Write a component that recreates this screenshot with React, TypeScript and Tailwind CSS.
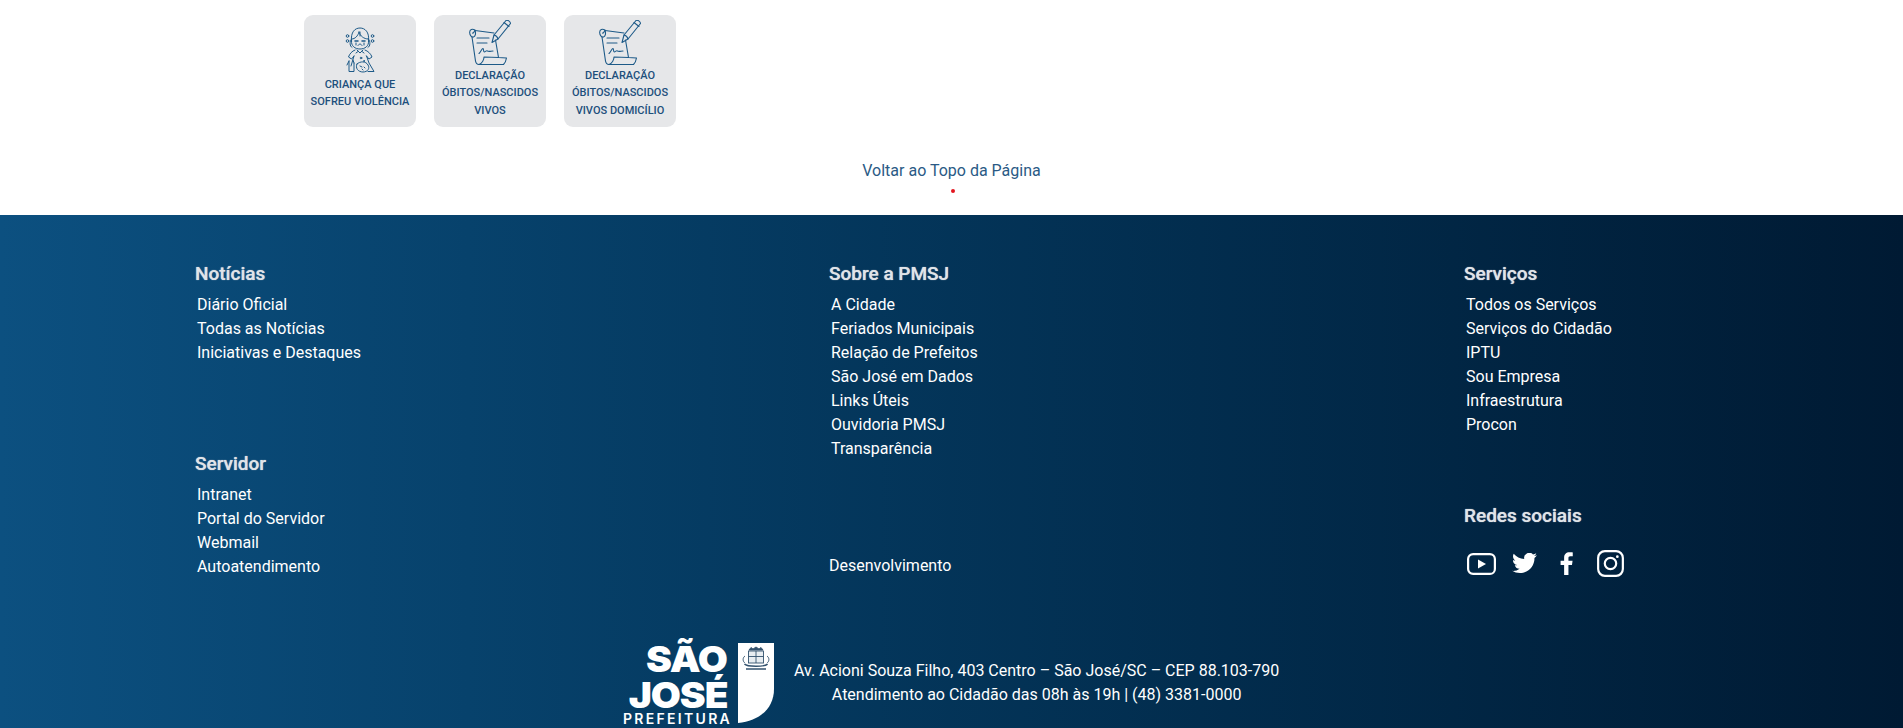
import React from "react";

const roboto = { fontFamily: "Roboto, sans-serif" };

function Scroll() {
  return (
    <svg width="42" height="46" viewBox="0 0 42 46" fill="none" stroke="#1d5a88" strokeWidth="1.100" strokeLinecap="round" strokeLinejoin="round">
      <path d="M6 10.500 L25 13 M3 17 L6.500 41 C7 43.500 8.500 44.500 10 44.500 L34.500 44.500 C36 43 37 41 37.500 38 L29.500 37.500 L26.500 20" />
      <path d="M6 10 C3 8.500 1 9.500 0.700 12 C0.500 15 2.500 17.500 4.500 17 C6.500 16.500 7 13.500 6 10 C5 12 4.500 13.500 3.500 13" />
      <path d="M10 44.500 C13 43.500 15 40 15 37 L29.500 37.500" />
      <path d="M8 18 L20 18 M8 23 L18 23" />
      <path d="M10 33.500 C12 32 13 28 14 28.500 C15 29 14 32 15.500 32 C17 31.500 17.500 30 18.500 31 C20 32 22 31 24 31" />
      <path d="M25 15 L37 0.500 C38.500 -0.500 41.500 1.500 41.500 3.500 L29 19 L23 22.500 Z" />
      <path d="M25 15 C27 15.500 28.500 17 29 19 M35 2.500 L40 6.500" />
    </svg>
  );
}

function Child() {
  return (
    <svg width="30" height="46" viewBox="0 0 30 46" fill="none" stroke="#1d5a88" strokeWidth="1" strokeLinecap="round" strokeLinejoin="round">
      <path d="M6.500 14 C5.500 5 10 1 15 1 C20 1 24.500 5 23.500 14 C24 19 20 22 15 22 C10 22 6 19 6.500 14 Z" />
      <path d="M7 12 C10 12 13 9 14 5 M14 5 C15 9 19 12 23 12 M15 5 L15 9" />
      <path d="M6.500 12 C4.500 15 4.500 19 7 20.500 M23.500 12 C25.500 15 25.500 19 23 20.500" />
      <path d="M10 14 L13 14 M17 14 L20 14" strokeWidth="1.500" />
      <path d="M11 16 L11 18 M19 16 L19 18 M13 18.500 C14 16.500 16 16.500 17 18.500" />
      <circle cx="2.500" cy="9" r="1.300" />
      <circle cx="2.500" cy="14" r="1.300" />
      <circle cx="27.500" cy="9" r="1.300" />
      <circle cx="27.500" cy="14" r="1.300" />
      <path d="M10 23 C7 24 4.500 27 3.500 30 L6.500 32 L9 29 M20 23 C23 24 26 27 27 30 L24 32 L21.500 29" />
      <path d="M12 23 L15 26 L18 23 M13 24.500 L11 26 M17 24.500 L19 26" />
      <path d="M9 29 L6 39 M21.500 29 L24 36 L29 44.500 L23 44.500" />
      <path d="M4 34 L4 44.500 L9 44.500 L9 36 M2 38 L4 34 M9 36 L8 33" />
      <path d="M12 37 C15 34 21 34 23 38 C25 41 23 45 18 45 C13 45 10 41 12 37 Z" />
      <circle cx="16" cy="31" r="0.800" />
      <circle cx="19" cy="34" r="0.500" />
      <path d="M15 39 L17 40 M19 40 L20 41 M17 42 L18 43" />
    </svg>
  );
}

function Card({ icon, lines, compact }: { icon: React.ReactNode; lines: string[]; compact?: boolean }) {
  return (
    <div className="flex h-[112px] w-[112px] flex-col items-center rounded-[9px] bg-[#e6e7e9] pt-[5px]">
      <div className={compact ? "flex h-[47px] items-start" : "flex h-[56px] items-start pt-[7px]"}>{icon}</div>
      <div className="text-center text-[11px] font-medium leading-[17.300px] whitespace-nowrap text-[#1d4f7c]">
        {lines.map((l) => (
          <div key={l}>{l}</div>
        ))}
      </div>
    </div>
  );
}

function Heading({ children }: { children: React.ReactNode }) {
  return <div className="text-[19px] font-medium leading-[24px] text-[#e0e4e9] [text-shadow:0_0_1px_#c7ccd3]">{children}</div>;
}

function LinkGroup({ title, links, className }: { title: string; links: string[]; className?: string }) {
  return (
    <div className={className}>
      <Heading>{title}</Heading>
      <ul className="mt-[7px] pl-[2px]">
        {links.map((l) => (
          <li key={l} className="text-[16px] leading-[24px] text-white">
            {l}
          </li>
        ))}
      </ul>
    </div>
  );
}

function Social() {
  return (
    <div className="mt-[22px] flex items-center pl-[3px]">
      <svg width="29" height="22" viewBox="0 0 29 22" fill="none" className="mr-[16px]">
        <rect x="1.100" y="1.100" width="26.800" height="19.800" rx="5" stroke="#fff" strokeWidth="2.200" />
        <path d="M11 6.500 L19 11 L11 15.500 Z" fill="#fff" />
      </svg>
      <svg width="25" height="22" viewBox="0 0 24 21" fill="#fff" className="mr-[23px]">
        <path d="M23.950 2.070a10 10 0 0 1-2.820.770 4.960 4.960 0 0 0 2.160-2.720c-.950.550-2 .950-3.130 1.180a4.920 4.920 0 0 0-8.380 4.480C7.690 5.590 4.070 3.630 1.640.660a4.820 4.820 0 0 0-.670 2.480c0 1.710.870 3.210 2.190 4.100a4.900 4.900 0 0 1-2.230-.620v.060a4.920 4.920 0 0 0 3.950 4.830 5 5 0 0 1-2.210.080 4.940 4.940 0 0 0 4.600 3.420A9.870 9.870 0 0 1 0 17.040a14 14 0 0 0 7.560 2.210c9.050 0 14-7.500 14-13.980 0-.210 0-.420-.020-.630a9.940 9.940 0 0 0 2.410-2.570z" />
      </svg>
      <svg width="14" height="23" viewBox="0 0 14 24" fill="#fff" className="mr-[23px]">
        <path d="M4 24 V13.500 H0.300 V9.200 H4 V6 C4 2.300 6.200 0.300 9.500 0.300 C11.100 0.300 12.500 0.400 13 0.500 V4.400 H10.500 C8.800 4.400 8.500 5.200 8.500 6.400 V9.200 H12.800 L12.200 13.500 H8.500 V24 Z" />
      </svg>
      <svg width="27" height="27" viewBox="0 0 26 26" fill="none" stroke="#fff" strokeWidth="2.100">
        <rect x="1.100" y="1.100" width="23.800" height="23.800" rx="6.500" />
        <circle cx="13" cy="13" r="5.500" />
        <circle cx="19.600" cy="6.400" r="1.300" fill="#fff" stroke="none" />
      </svg>
    </div>
  );
}

function Crest() {
  return (
    <g fill="none" stroke="#33526e" strokeWidth="0.900">
      <path d="M11 7 L13 4.500 L15 6 L18 4 L21 6 L23 4.500 L25 7 Z" fill="#33526e" />
      <rect x="10.500" y="8" width="15" height="12" fill="#e8edf1" />
      <path d="M10.500 13.500 H25.500 M18 8 V20" />
      <path d="M7 13 C4 15 5 19 7 20 M29 13 C32 15 31 19 29 20" />
      <path d="M6.500 21 C9 24 27 24 29.500 21" strokeWidth="1.500" />
      <path d="M8 26 H28" strokeWidth="1.500" />
    </g>
  );
}

function Logo() {
  return (
    <div className="flex items-start">
      <div className="relative h-[88px] w-[107px] text-white" style={{ fontFamily: "Inter, sans-serif" }}>
        <div className="absolute right-[3px] top-[1px] origin-right scale-x-[1.08] text-[36px] font-black leading-[44px] tracking-[-1px]">SÃO</div>
        <div className="absolute right-[3px] top-[37px] origin-right scale-x-[1.08] text-[36px] font-black leading-[44px] tracking-[-1px]">JOSÉ</div>
        <div className="absolute left-0 top-[75px] text-[14px] font-semibold leading-[16px] tracking-[2.300px] whitespace-nowrap">PREFEITURA</div>
      </div>
      <svg width="36" height="80" viewBox="0 0 36 80" className="ml-[8px] mt-[7px]">
        <path d="M0 0 H36 V46 C36 65 22 78 0 80 Z" fill="#fff" />
        <Crest />
      </svg>
    </div>
  );
}

export default function App() {
  return (
    <div className="min-h-[728px] overflow-hidden bg-white" style={roboto}>
      <div className="flex gap-[18px] pl-[304px] pt-[15px]">
        <Card icon={<Child />} lines={["CRIANÇA QUE", "SOFREU VIOLÊNCIA"]} />
        <Card compact icon={<Scroll />} lines={["DECLARAÇÃO", "ÓBITOS/NASCIDOS", "VIVOS"]} />
        <Card compact icon={<Scroll />} lines={["DECLARAÇÃO", "ÓBITOS/NASCIDOS", "VIVOS DOMICÍLIO"]} />
      </div>

      <div className="mt-[34px] text-center text-[16px] leading-[20px] text-[#2a5a85]">Voltar ao Topo da Página</div>
      <div className="mt-[8px] flex justify-center pl-[2px]">
        <div className="h-[4px] w-[4px] rounded-full bg-[#e3161f]" />
      </div>
      <div className="h-[22px]" />

      <footer className="h-[513px] overflow-hidden bg-gradient-to-r from-[#0c5080] to-[#001a33] pl-[195px] pt-[47px]">
        <div className="grid grid-cols-[634px_635px_1fr]">
          <div>
            <LinkGroup title="Notícias" links={["Diário Oficial", "Todas as Notícias", "Iniciativas e Destaques"]} />
            <LinkGroup className="mt-[87px]" title="Servidor" links={["Intranet", "Portal do Servidor", "Webmail", "Autoatendimento"]} />
          </div>
          <div className="flex flex-col">
            <LinkGroup title="Sobre a PMSJ" links={["A Cidade", "Feriados Municipais", "Relação de Prefeitos", "São José em Dados", "Links Úteis", "Ouvidoria PMSJ", "Transparência"]} />
            <div className="mt-[93px] text-[16px] leading-[24px] text-white">Desenvolvimento</div>
          </div>
          <div>
            <LinkGroup title="Serviços" links={["Todos os Serviços", "Serviços do Cidadão", "IPTU", "Sou Empresa", "Infraestrutura", "Procon"]} />
            <div className="mt-[67px]">
              <Heading>Redes sociais</Heading>
            </div>
            <Social />
          </div>
        </div>
        <div className="ml-[428px] mt-[57px] flex items-start">
          <Logo />
          <div className="ml-[20px] mt-[23px] text-center text-[16px] leading-[24px] text-white">
            <div>Av. Acioni Souza Filho, 403 Centro – São José/SC – CEP 88.103-790</div>
            <div>Atendimento ao Cidadão das 08h às 19h | (48) 3381-0000</div>
          </div>
        </div>
      </footer>
    </div>
  );
}
